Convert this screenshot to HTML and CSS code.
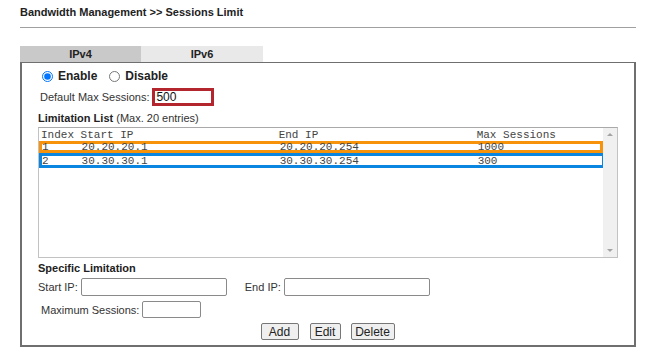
FILE: index.html
```html
<!DOCTYPE html>
<html lang="en">
<head>
    <meta charset="UTF-8">
    <title>Sessions Limit</title>
    <link rel="stylesheet" href="styles.css">
</head>
<body>
    <div class="page">
        <h1>Bandwidth Management &gt;&gt; Sessions Limit</h1>
        <div class="rule"></div>

        <div class="tabs">
            <div class="tab active">IPv4</div>
            <div class="tab">IPv6</div>
        </div>

        <div class="panel">
            <div class="row radios">
                <label><input type="radio" name="state" checked> Enable</label>
                <label><input type="radio" name="state"> Disable</label>
            </div>

            <div class="row default">
                <span class="lbl">Default Max Sessions:</span>
                <input type="text" class="field mark-red" value="500">
            </div>

            <div class="row caption"><b>Limitation List</b>&nbsp;(Max. 20 entries)</div>

            <div class="listbox">
                <div class="list-items">
                    <div class="item">Index Start IP                      End IP                        Max Sessions</div>
                    <div class="item mark-orange">1     20.20.20.1                    20.20.20.254                  1000</div>
                    <div class="item mark-blue">2     30.30.30.1                    30.30.30.254                  300</div>
                </div>
                <div class="scrollbar">
                    <span class="arrow up"></span>
                    <span class="arrow down"></span>
                </div>
            </div>

            <div class="row caption specific"><b>Specific Limitation</b></div>

            <div class="row ips">
                <span class="lbl">Start IP:</span>
                <input type="text" class="field wide">
                <span class="lbl end">End IP:</span>
                <input type="text" class="field wide">
            </div>

            <div class="row maxrow">
                <span class="lbl">Maximum Sessions:</span>
                <input type="text" class="field small">
            </div>

            <div class="row buttons">
                <button type="button" class="btn-add">Add</button>
                <button type="button" class="btn-edit">Edit</button>
                <button type="button" class="btn-delete">Delete</button>
            </div>
        </div>
    </div>
</body>
</html>
```

FILE: styles.css
```css
body {
    margin: 0;
    font-family: "Liberation Sans", Arial, sans-serif;
    font-size: 11px;
    color: #333;
    background: #fff;
}
.page {
    width: 616px;
    padding: 6px 0 0 20px;
}
h1 {
    margin: 0;
    font-size: 11px;
    line-height: 13px;
    font-weight: bold;
    color: #222;
}
.rule {
    height: 1px;
    background: #a0a0a0;
    margin-top: 8px;
}
.tabs {
    display: flex;
    margin-top: 18px;
}
.tab {
    width: 122px;
    height: 16px;
    line-height: 17px;
    text-align: center;
    font-size: 11px;
    font-weight: bold;
    color: #222;
    background: #e9e9e9;
}
.tab.active {
    width: 121px;
    background: #c9c9c9;
}
.panel {
    border: 2px solid #6f6f6f;
    border-top-width: 1px;
    padding: 0 16px 3px 16px;
    height: 279px;
}
.row {
    display: flex;
    align-items: center;
}
.radios {
    margin-top: 5px;
    height: 16px;
    font-size: 12px;
    font-weight: bold;
    color: #222;
}
.radios label {
    display: flex;
    align-items: center;
    margin-right: 8px;
}
.radios input {
    margin: 0 5px 0 4px;
    width: 11px;
    height: 11px;
}
.lbl {
    color: #333;
}
.default {
    margin-top: 4px;
    height: 18px;
    padding-left: 2px;
}
.field {
    box-sizing: border-box;
    height: 18px;
    border: 1px solid #8a8a8a;
    border-radius: 2px;
    font-family: "Liberation Sans", Arial, sans-serif;
    font-size: 12px;
    padding: 0 3px;
    margin: 0 0 0 3px;
    color: #111;
}
.mark-red {
    width: 62px;
    border: 3px solid #b3262e;
    border-radius: 0;
    padding: 0 1px;
}
.caption {
    margin-top: 6px;
    height: 12px;
    color: #333;
}
.caption b {
    color: #222;
}
.listbox {
    margin-top: 3px;
    height: 129px;
    border: 1px solid #c2c2c2;
    border-top-color: #a9a9a9;
    display: flex;
}
.list-items {
    flex: 1;
    padding-top: 1px;
}
.item {
    font-family: "Liberation Mono", "Courier New", monospace;
    font-size: 11px;
    line-height: 12px;
    height: 12px;
    white-space: pre;
    color: #444;
    padding-left: 2px;
    box-sizing: border-box;
}
.mark-orange {
    height: 12px;
    line-height: 7px;
    border: 3px solid #f7930a;
    padding-left: 0;
}
.mark-blue {
    height: 15px;
    line-height: 10px;
    border: 3px solid #0a86e0;
    padding-left: 0;
    margin-right: -2px;
}
.scrollbar {
    width: 14px;
    background: #f0f0f0;
    position: relative;
}
.arrow {
    position: absolute;
    left: 4px;
    width: 0;
    height: 0;
    border-left: 3px solid transparent;
    border-right: 3px solid transparent;
}
.arrow.up {
    top: 5px;
    border-bottom: 3px solid #a3a3a3;
}
.arrow.down {
    bottom: 5px;
    border-top: 3px solid #a3a3a3;
}
.specific {
    margin-top: 4px;
}
.ips {
    margin-top: 4px;
    height: 18px;
}
.wide {
    width: 146px;
}
.end {
    margin-left: 18px;
}
.maxrow {
    margin-top: 5px;
    height: 17px;
    padding-left: 3px;
}
.small {
    width: 59px;
    height: 17px;
}
.buttons {
    justify-content: center;
    margin-top: 5px;
    gap: 10px;
    padding-right: 1px;
}
button {
    font-family: "Liberation Sans", Arial, sans-serif;
    font-size: 12px;
    color: #222;
    height: 17px;
    padding: 0;
    border: 1px solid #777;
    border-radius: 2px;
    background: #efefef;
}
.btn-add {
    width: 38px;
    margin-right: 1px;
}
.btn-edit {
    width: 31px;
}
.btn-delete {
    width: 44px;
}
```
